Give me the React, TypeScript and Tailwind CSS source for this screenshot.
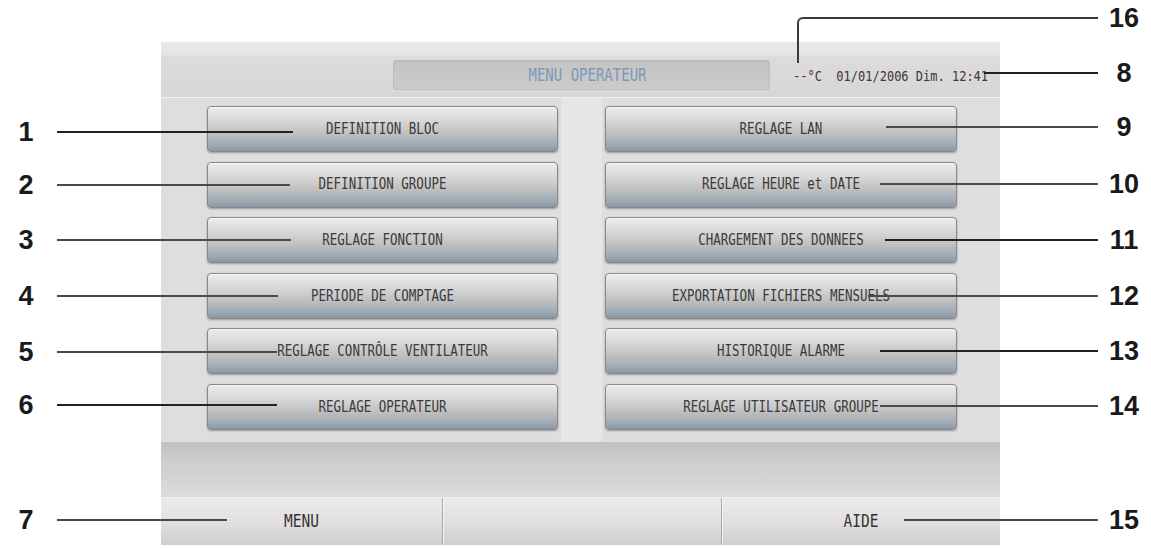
import React from "react";

const MONO = "font-['DejaVu_Sans_Mono','Liberation_Mono',monospace]";

function Btn({ label }: { label: string }) {
  return (
    <div className="h-[46px] rounded-[4px] border border-[#878787] bg-[linear-gradient(to_bottom,#ececec_0%,#dadada_28%,#c0c0c0_60%,#a0acb6_85%,#8a98a4_100%)] shadow-[inset_0_1px_0_#f8f8f8,0_1px_2px_rgba(0,0,0,0.3)] flex items-center justify-center">
      <span className={`inline-block scale-y-[1.3] text-[12.5px] leading-none text-[#3a3a3a] whitespace-pre ${MONO}`}>{label}</span>
    </div>
  );
}

const leftBtns = [
  "DEFINITION BLOC",
  "DEFINITION GROUPE",
  "REGLAGE FONCTION",
  "PERIODE DE COMPTAGE",
  "REGLAGE CONTRÔLE VENTILATEUR",
  "REGLAGE OPERATEUR",
];
const rightBtns = [
  "REGLAGE LAN",
  "REGLAGE HEURE et DATE",
  "CHARGEMENT DES DONNEES",
  "EXPORTATION FICHIERS MENSUELS",
  "HISTORIQUE ALARME",
  "REGLAGE UTILISATEUR GROUPE",
];

type Call = { n: string; y: number; x1: number; x2: number; side: "l" | "r"; thick?: boolean };

const calls: Call[] = [
  { n: "1", y: 132, x1: 57, x2: 293, side: "l", thick: true },
  { n: "2", y: 185, x1: 57, x2: 290, side: "l" },
  { n: "3", y: 240, x1: 57, x2: 291, side: "l" },
  { n: "4", y: 296, x1: 57, x2: 278, side: "l" },
  { n: "5", y: 352, x1: 57, x2: 277, side: "l" },
  { n: "6", y: 405, x1: 57, x2: 277, side: "l", thick: true },
  { n: "7", y: 520, x1: 57, x2: 227, side: "l" },
  { n: "8", y: 73, x1: 984, x2: 1098, side: "r", thick: true },
  { n: "9", y: 127, x1: 886, x2: 1098, side: "r" },
  { n: "10", y: 184, x1: 880, x2: 1098, side: "r" },
  { n: "11", y: 240, x1: 885, x2: 1098, side: "r", thick: true },
  { n: "12", y: 296, x1: 868, x2: 1098, side: "r" },
  { n: "13", y: 351, x1: 880, x2: 1098, side: "r", thick: true },
  { n: "14", y: 406, x1: 880, x2: 1098, side: "r" },
  { n: "15", y: 520, x1: 904, x2: 1098, side: "r" },
];

export default function App() {
  return (
    <div className="relative w-[1151px] h-[548px] bg-white overflow-hidden pt-[42px] pl-[161px] font-['Liberation_Sans',Arial,sans-serif]">
      {/* Panel */}
      <div className="w-[839px] h-[503px] flex flex-col bg-[#e0dede]">
        {/* Header */}
        <div className="h-[56px] border-b border-[#f2f1f1] bg-[linear-gradient(to_bottom,#eae8e8_0px,#e7e5e5_13px,#dddbdb_14px,#d7d5d5_55px)] flex items-start pt-[18px] pl-[232px]">
          <div className="w-[377px] h-[30px] rounded-[3px] border border-[#bebdbd] bg-[linear-gradient(to_bottom,#c5c4c4,#cccbcb)] shadow-[inset_0_1px_1px_rgba(0,0,0,0.08)] flex items-center justify-center pl-[12px]">
            <span className={`inline-block scale-y-[1.2] text-[14px] leading-none text-[#7d97b9] whitespace-pre ${MONO}`}>MENU OPERATEUR</span>
          </div>
          <div className="ml-[23px] h-[30px] flex items-center pt-[2px]">
            <span className={`inline-block scale-y-[1.15] text-[12px] leading-none text-[#3a3a3a] whitespace-pre ${MONO}`}>--°C  01/01/2006 Dim. 12:41</span>
          </div>
        </div>

        {/* Content */}
        <div className="h-[344px] flex pl-[46px] pr-[43px] bg-[#dfdddd]">
          <div className="w-[351px] flex flex-col gap-[9.6px] pt-[8px]">
            {leftBtns.map((b) => (
              <Btn key={b} label={b} />
            ))}
          </div>
          <div className="w-[47px] flex justify-center">
            <div className="w-[41px] bg-[#e7e6e6]" />
          </div>
          <div className="w-[352px] flex flex-col gap-[9.6px] pt-[8px]">
            {rightBtns.map((b) => (
              <Btn key={b} label={b} />
            ))}
          </div>
        </div>

        {/* Empty band */}
        <div className="h-[56px] border-b border-[#efeeee] bg-[linear-gradient(to_bottom,#c2c0c0_0%,#cfcdcd_35%,#dcdada_100%)]" />

        {/* Footer */}
        <div className="h-[47px] flex bg-[linear-gradient(to_bottom,#eceaea_0%,#e0dede_55%,#d0cece_100%)]">
          <div className="w-[281px] flex items-center justify-center">
            <span className={`inline-block scale-y-[1.25] text-[14.5px] leading-none text-[#333] ${MONO}`}>MENU</span>
          </div>
          <div className="w-[279px] border-l border-[#a9a7a7] shadow-[inset_1px_0_0_#f4f4f4]" />
          <div className="flex-1 border-l border-[#a9a7a7] shadow-[inset_1px_0_0_#f4f4f4] flex items-center justify-center">
            <span className={`inline-block scale-y-[1.25] text-[14.5px] leading-none text-[#333] ${MONO}`}>AIDE</span>
          </div>
        </div>
      </div>

      {/* Callout 16: L-shaped leader */}
      <div className="absolute left-[797px] top-[17px] w-[301px] h-[46px] border-l-2 border-t-2 border-[#3a3a3a] rounded-tl-[6px]" />
      <div className="absolute left-[1104px] top-[3px] w-[40px] h-[30px] flex items-center justify-center text-[27px] font-bold leading-none text-[#1a1a1a]">16</div>

      {/* Callouts */}
      {calls.map((c) => (
        <React.Fragment key={c.n}>
          <div
            className={`absolute ${c.thick ? "h-[2px] bg-[#222]" : "h-[2px] bg-[#4a4a4a]"}`}
            style={{ left: c.x1, top: c.y - 1, width: c.x2 - c.x1 }}
          />
          <div
            className="absolute h-[30px] w-[40px] flex items-center justify-center text-[27px] font-bold leading-none text-[#1a1a1a]"
            style={{ left: c.side === "l" ? 6 : 1104, top: c.y - 15 }}
          >
            {c.n}
          </div>
        </React.Fragment>
      ))}
    </div>
  );
}
